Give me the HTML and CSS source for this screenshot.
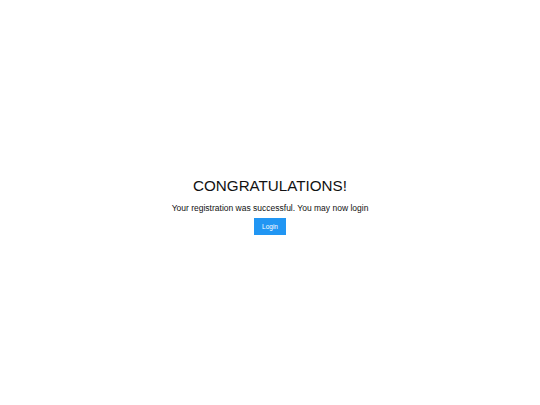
FILE: index.html
```html
<!DOCTYPE html>
<html lang="en">
<head>
<meta charset="utf-8">
<title>Registration successful</title>
<link rel="stylesheet" href="styles.css">
</head>
<body>
<main class="page">
  <section class="success">
    <h1 class="success-title">CONGRATULATIONS!</h1>
    <p class="success-text">Your registration was successful. You may now login</p>
    <a class="success-button" href="#">Login</a>
  </section>
</main>
</body>
</html>
```

FILE: styles.css
```css
html, body {
  margin: 0;
  padding: 0;
  background: #ffffff;
}

body {
  font-family: "Liberation Sans", Arial, sans-serif;
  color: #111111;
}

.page {
  height: 405px;
  display: flex;
  align-items: center;
  justify-content: center;
  padding-top: 6px;
  box-sizing: border-box;
}

.success {
  display: flex;
  flex-direction: column;
  align-items: center;
}

.success-title {
  margin: 0;
  font-size: 15.2px;
  font-weight: 400;
  line-height: 18px;
  color: #111111;
}

.success-text {
  margin: 8px 0 0;
  font-size: 8.5px;
  line-height: 10px;
  color: #111111;
}

.success-button {
  margin-top: 5px;
  width: 32px;
  height: 17px;
  display: flex;
  align-items: center;
  justify-content: center;
  background: #2196f3;
  color: #ffffff;
  font-size: 6.5px;
  text-decoration: none;
}
```
